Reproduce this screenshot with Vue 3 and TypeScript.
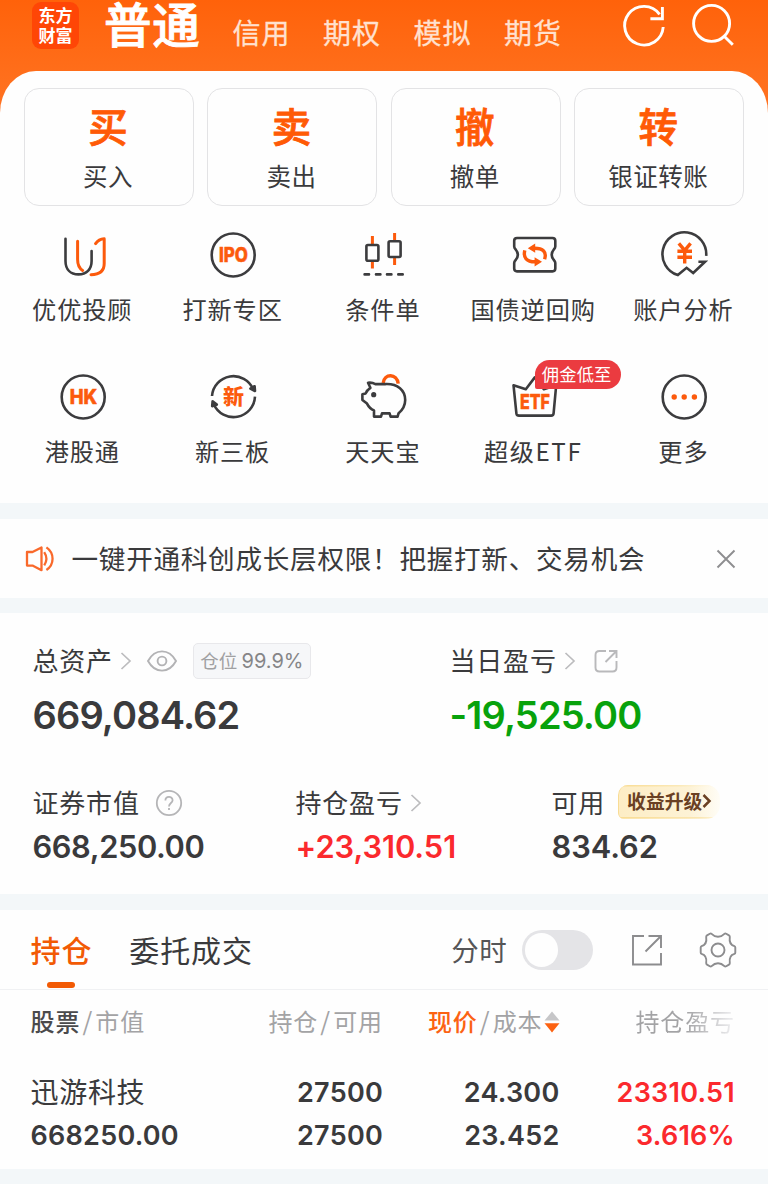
<script setup lang="ts">
interface Action { glyph: string; label: string }
interface Tool { icon: string; label: string; badge?: string }

const markets: string[] = ['信用', '期权', '模拟', '期货']

const actions: Action[] = [
  { glyph: '买', label: '买入' },
  { glyph: '卖', label: '卖出' },
  { glyph: '撤', label: '撤单' },
  { glyph: '转', label: '银证转账' },
]

const tools: Tool[] = [
  { icon: 'advisor', label: '优优投顾' },
  { icon: 'ipo', label: '打新专区' },
  { icon: 'candles', label: '条件单' },
  { icon: 'bond', label: '国债逆回购' },
  { icon: 'analysis', label: '账户分析' },
  { icon: 'hk', label: '港股通' },
  { icon: 'neeq', label: '新三板' },
  { icon: 'piggy', label: '天天宝' },
  { icon: 'etf', label: '超级ETF', badge: '佣金低至' },
  { icon: 'more', label: '更多' },
]
</script>

<template>
  <div class="page">
    <header class="top">
      <div class="logo"><span>东方</span><span>财富</span></div>
      <h1 class="current">普通</h1>
      <nav class="markets">
        <span v-for="m in markets" :key="m">{{ m }}</span>
      </nav>
      <svg class="top-icon" width="48" height="50" viewBox="620 0 48 50" fill="none" stroke="#fff" stroke-width="2.9">
        <path d="M663.2 27A19.3 19.3 0 1 1 659.6 14.4" />
        <path d="M662.4 7V18.8H650.4" />
      </svg>
      <svg class="top-icon search" width="48" height="50" viewBox="690 0 48 50" fill="none" stroke="#fff" stroke-width="2.9">
        <circle cx="711.6" cy="23.4" r="18" />
        <path d="M724.2 36.2L732.8 44.8" />
      </svg>
    </header>

    <main class="panel">
      <div class="actions">
        <button v-for="a in actions" :key="a.label" class="action">
          <b>{{ a.glyph }}</b>
          <span>{{ a.label }}</span>
        </button>
      </div>

      <div class="tools">
        <div v-for="t in tools" :key="t.icon" class="tool">
          <div class="tool-icon">
            <svg width="50" height="50" viewBox="0 0 50 50" fill="none" stroke="#3c3c3e" stroke-width="2.6" stroke-linecap="round" stroke-linejoin="round">
              <template v-if="t.icon === 'advisor'">
                <path d="M7.5 8.7V31C7.5 39.5 12.6 44.4 20.5 44.4S33.6 39.5 33.6 31V21" />
                <path class="hot" stroke-width="3" d="M19.6 11.3V29.5C19.6 35 21.4 38.4 24.6 40.4M37.6 13.6C39.8 10.4 42.6 9 46.2 8.8V33.5C46.2 40.6 41.4 44.6 33 44.8" />
              </template>
              <template v-else-if="t.icon === 'ipo'">
                <circle cx="25.2" cy="25" r="21.5" />
                <text x="25.4" y="32" font-size="19.5" textLength="29" lengthAdjust="spacingAndGlyphs">IPO</text>
              </template>
              <template v-else-if="t.icon === 'candles'">
                <path class="hot thick" stroke-linecap="butt" d="M14.4 6V14M14.4 32V38.6M36.6 3V10M36.6 28V35" />
                <rect x="8.4" y="15" width="12" height="15.8" rx="1.5" />
                <rect x="30.6" y="11.2" width="12" height="15.8" rx="1.5" />
                <path d="M6.6 44.4H11M18 44.4H22.4M29 44.4H33.4M40.3 44.4H44.7" />
              </template>
              <template v-else-if="t.icon === 'bond'">
                <path d="M8 8H43.5Q46.3 8 46.3 10.8V16.5Q46.3 18 44.8 19.5Q40.6 24.7 44.8 30Q46.3 31.5 46.3 33V38.6Q46.3 41.4 43.5 41.4H8Q5.2 41.4 5.2 38.6V33Q5.2 31.5 6.7 30Q11 24.7 6.7 19.5Q5.2 18 5.2 16.5V10.8Q5.2 8 8 8Z" />
                <path class="hot heavy" stroke-linecap="butt" d="M15.8 20.4C14 27.5 17.6 31.8 26 31.8M25.4 18.3C34 18.3 38 21.9 35.6 29.2" />
                <path class="fill" d="M33 31.8L25.6 27.2V36.4ZM18.8 18.2L26.2 13.6V22.8Z" />
              </template>
              <template v-else-if="t.icon === 'analysis'">
                <path stroke-linecap="butt" stroke-linejoin="miter" d="M47.2 25.8A21.9 21.9 0 1 0 18.8 45.1L27.6 37.8L34.2 43L46 31.8H39.4" />
                <path class="hot heavy" stroke-linecap="butt" d="M19.8 13.3L25.7 20.4L31.6 13.3M25.7 20V33.6M18.4 21.2H33M18.4 27.2H33" />
              </template>
              <template v-else-if="t.icon === 'hk'">
                <circle cx="25.2" cy="25" r="21.5" />
                <text x="25.4" y="32" font-size="19.5" textLength="27.5" lengthAdjust="spacingAndGlyphs">HK</text>
              </template>
              <template v-else-if="t.icon === 'neeq'">
                <path stroke-linecap="butt" d="M4 24A21.5 21.5 0 0 1 45.2 17.2M47 24.6A21.5 21.5 0 0 1 5.8 32.2" />
                <path class="ink" d="M47 19L46.6 14.2L42.4 16.6ZM4.6 29.4L4.2 34.2L8.8 32.6Z" />
                <text class="cjk" x="25.4" y="32.4" font-size="21">新</text>
              </template>
              <template v-else-if="t.icon === 'piggy'">
                <path class="hot heavy" stroke-linecap="butt" d="M25.2 11C26.2 1.2 39 1.2 40.2 11.6" />
                <path d="M10 10.8Q14 10.2 17.4 12.1H27C40 11.4 47.2 18.5 47.2 28C47.2 34 44.7 37.8 40.6 41.2L39.6 44.6H32.6L31.6 41.4H24L23 44.6H16V38.4Q11.5 36.6 9 31.6L4.4 28V22.2L7.7 21.4Q9 18 12.4 15.8Z" />
                <circle class="ink" cx="15.7" cy="22.7" r="1.3" />
              </template>
              <template v-else-if="t.icon === 'etf'">
                <path d="M4.5 13.2L16.8 17.2L25.8 5.4L34.8 17.2L47.2 13.2L44.6 41.4Q44.4 43.6 42.2 43.6H10Q7.8 43.6 7.4 41.4Z" />
                <text x="26" y="36.6" font-size="20.5" textLength="30" lengthAdjust="spacingAndGlyphs">ETF</text>
              </template>
              <template v-else>
                <circle cx="25.2" cy="25" r="21.5" />
                <g class="dots"><circle cx="15.2" cy="25" r="2.7" /><circle cx="25.2" cy="25" r="2.7" /><circle cx="35.4" cy="25" r="2.7" /></g>
              </template>
            </svg>
            <em v-if="t.badge" class="badge">{{ t.badge }}</em>
          </div>
          <span class="tool-label" :class="{ latin: t.icon === 'etf' }">{{ t.label }}</span>
        </div>
      </div>
    </main>

    <section class="notice">
      <svg width="32" height="32" viewBox="24 543 32 32" fill="none" stroke="#f9692b" stroke-width="2.3" stroke-linejoin="round">
        <path d="M27 552H32.5L41.5 547.4V570.2L32.5 565.6H27Z" />
        <path d="M44.2 552.2Q48.6 558.8 44.2 565.4M46.4 547.4C54.6 553 54.6 564.6 46.4 570" />
      </svg>
      <p>一键开通科创成长层权限！把握打新、交易机会</p>
      <svg class="close" width="20" height="20" viewBox="0 0 20 20" fill="none" stroke="#8e8e90" stroke-width="1.9"><path d="M1.5 1.5L18.5 18.5M18.5 1.5L1.5 18.5" /></svg>
    </section>

    <section class="assets">
      <div class="row main-row">
        <div class="cell">
          <div class="label">
            <span>总资产</span>
            <svg class="chev" width="12" height="20" viewBox="0 0 12 20"><path d="M1.5 2L10 10L1.5 18" /></svg>
            <svg class="eye" width="32" height="26" viewBox="0 0 32 26" fill="none" stroke="#b3b3b5" stroke-width="1.9"><path d="M2 13C9 .2 23 .2 30 13C23 25.8 9 25.8 2 13Z" /><circle cx="16" cy="13" r="4.4" /></svg>
            <span class="ratio">仓位 <i>99.9%</i></span>
          </div>
          <strong>669,084.62</strong>
        </div>
        <div class="cell">
          <div class="label">
            <span>当日盈亏</span>
            <svg class="chev" width="12" height="20" viewBox="0 0 12 20"><path d="M1.5 2L10 10L1.5 18" /></svg>
            <svg class="share" width="24" height="24" viewBox="0 0 24 24" fill="none" stroke="#b9b9bb" stroke-width="1.9"><path d="M12 2H5.5Q1.5 2 1.5 6V18.5Q1.5 22.5 5.5 22.5H18.5Q22.5 22.5 22.5 18.5V12M15 2H22.5V9M22 2.5L11.5 13" /></svg>
          </div>
          <strong class="green">-19,525.00</strong>
        </div>
      </div>
      <div class="row sub-row">
        <div class="cell">
          <div class="label">
            <span>证券市值</span>
            <svg class="help" width="28" height="28" viewBox="0 0 28 28" fill="none" stroke="#b5b5b7" stroke-width="1.8"><circle cx="14" cy="14" r="12.2" /><path d="M10.4 11.5C10.4 6.6 17.6 6.8 17.6 11.2C17.6 14 14 14 14 17.4M14 19V21" /></svg>
          </div>
          <strong class="tight">668,250.00</strong>
        </div>
        <div class="cell">
          <div class="label">
            <span>持仓盈亏</span>
            <svg class="chev" width="12" height="20" viewBox="0 0 12 20"><path d="M1.5 2L10 10L1.5 18" /></svg>
          </div>
          <strong class="red">+23,310.51</strong>
        </div>
        <div class="cell">
          <div class="label">
            <span>可用</span>
            <span class="gold">收益升级<svg width="10" height="16" viewBox="0 0 10 16" fill="none" stroke="#6a4023" stroke-width="2.5"><path d="M1.5 2L7.5 8L1.5 14" /></svg></span>
          </div>
          <strong>834.62</strong>
        </div>
      </div>
    </section>

    <section class="holdings">
      <div class="tabs">
        <span class="tab active">持仓</span>
        <span class="tab">委托成交</span>
        <span class="minute">分时</span>
        <span class="toggle"><i></i></span>
        <svg class="open" width="34" height="34" viewBox="0 0 34 34" fill="none" stroke="#8c8c8e" stroke-width="1.9"><path d="M14 3H3V31.5H31V20M18.5 3H31V15M31 3L15.5 18.5" /></svg>
        <svg class="gear" width="38" height="38" viewBox="0 0 38 38" fill="none" stroke="#8c8c8e" stroke-width="1.9" stroke-linejoin="round">
          <path d="M12.6 2.9Q15.4 5.8 19 5.8T25.4 2.9Q26.2 2.2 27.2 2.8L30 4.4Q31 5 30.8 6.2C30 11.6 32 14.2 35.4 15.2Q36.3 15.6 36.3 16.6V21.4Q36.3 22.4 35.4 22.8C32 23.8 30 26.4 30.8 31.8Q31 33 30 33.6L27.2 35.2Q26.2 35.8 25.4 35.1Q22.6 32.2 19 32.2T12.6 35.1Q11.8 35.8 10.8 35.2L8 33.6Q7 33 7.2 31.8C8 26.4 6 23.8 2.6 22.8Q1.7 22.4 1.7 21.4V16.6Q1.7 15.6 2.6 15.2C6 14.2 8 11.6 7.2 6.2Q7 5 8 4.4L10.8 2.8Q11.8 2.2 12.6 2.9Z" />
          <circle cx="19" cy="19" r="6.5" />
        </svg>
      </div>
      <div class="thead">
        <span><b>股票</b><s>/</s>市值</span>
        <span>持仓<s>/</s>可用</span>
        <span class="sorted"><b>现价</b><s>/</s>成本<svg width="16" height="22" viewBox="0 0 16 22"><path fill="#c6c6c8" d="M8 .5L15.5 9.5H.5Z" /><path fill="#fc6212" d="M.5 12.2H15.5L8 21.5Z" /></svg></span>
        <span class="fade">持仓盈亏</span>
      </div>
      <div class="holding">
        <div><span class="name">迅游科技</span><span>668250.00</span></div>
        <div><span>27500</span><span>27500</span></div>
        <div><span>24.300</span><span>23.452</span></div>
        <div class="red"><span>23310.51</span><span>3.616%</span></div>
      </div>
    </section>
  </div>
</template>

<style>
body { margin: 0; background: #f3f7f9; }
</style>

<style scoped>
* { box-sizing: border-box; }
.page {
  width: 768px; height: 1184px; overflow: hidden;
  background: linear-gradient(#ff620a 0, #ff6f1c 80px, #ff7222 115px, #f3f7f9 115px);
  font-family: "Noto Sans CJK SC", sans-serif; color: #3a3a3c;
}
svg { display: block; flex: none; }
.top { display: flex; align-items: flex-start; height: 71px; padding-left: 32px; color: #fff; }
.logo {
  width: 47px; height: 47px; margin-top: 2px; padding-top: 3px; border-radius: 9px; background: #ff4606;
  font: 700 17px/19.5px "Noto Sans CJK SC", sans-serif; text-align: center;
}
.logo span { display: block; }
.current { margin: -1px 0 0 25px; width: 98px; font-size: 47.5px; line-height: 48px; font-weight: 500; letter-spacing: .8px; -webkit-text-stroke: .9px #fff; }
.markets { display: flex; gap: 32.5px; margin: 12px 0 0 30.5px; font-size: 28px; line-height: 40px; letter-spacing: 1px; color: #ffe1d0; -webkit-text-stroke: .3px #ffe1d0; }
.markets span { width: 58px; white-space: nowrap; }
.top-icon { margin-left: 58px; }
.top-icon.search { margin-left: 22px; }

.panel { height: 432px; padding: 17px 24px 0; background: #fefefe; border-radius: 36px 36px 0 0 / 42px 42px 0 0; }
.actions { display: grid; grid-template-columns: repeat(4, 170px); column-gap: 13.4px; }
.action {
  height: 118px; padding: 12px 2px 0 0; border: 1.5px solid #e3e3e5; border-radius: 15px; background: #fefefe;
  font-family: inherit; color: #3a3a3c; display: flex; flex-direction: column; align-items: center;
}
.action b { font-size: 39.5px; line-height: 48px; font-weight: 500; -webkit-text-stroke: .8px #ff5a06; color: #ff5a06; }
.action span { margin-top: 9px; font-size: 24.5px; line-height: 36px; letter-spacing: .5px; }
.tools { display: grid; grid-template-columns: repeat(5, 150.3px); grid-auto-rows: 142px; margin: 24px 0 0 -16.4px; }
.tool { display: flex; flex-direction: column; align-items: center; }
.tool-icon { position: relative; height: 50px; }
.tool-label { margin: 10.5px 1px 0 0; font-size: 24.2px; line-height: 36px; letter-spacing: .9px; white-space: nowrap; }
.tool-label.latin { letter-spacing: 1.6px; }
.tool .hot { stroke: #fc5a0c; }
.tool .thick { stroke-width: 3; }
.tool .heavy { stroke-width: 3.4; }
.tool .fill, .dots { fill: #fc5a0c; stroke: none; }
.tool .ink { fill: #3c3c3e; }
.tool text { fill: #fc5a0c; stroke: #fc5a0c; stroke-width: .5; font-family: Inter, sans-serif; font-weight: 800; text-anchor: middle; }
.tool text.cjk { font-family: "Noto Sans CJK SC", sans-serif; stroke: none; }
.badge {
  position: absolute; left: 26px; top: -12px; width: 86px; height: 29px; border-radius: 15px 15px 15px 2px; background: #eb3b40;
  color: #fff; font-style: normal; font-size: 17.3px; line-height: 28px; text-align: center; white-space: nowrap; letter-spacing: .2px; padding-right: 2px;
}

.notice { display: flex; align-items: center; height: 79px; margin-top: 16px; padding-left: 24px; background: #fefefe; }
.notice p { margin: 0 0 2px 15.5px; width: 600px; font-size: 26.6px; line-height: 40px; letter-spacing: .73px; white-space: nowrap; }
.close { margin-left: 44.5px; }

.assets { height: 281px; margin-top: 15px; padding: 26px 0 0 32.5px; background: #fefefe; }
.row { display: flex; }
.label { display: flex; align-items: center; height: 44px; font-size: 26px; letter-spacing: .8px; }
.label > span:first-child { margin-top: -4px; white-space: nowrap; }
.chev { fill: none; stroke: #bcbcbe; stroke-width: 1.7; margin-left: 7px; }
.eye { margin-left: 14px; }
.ratio {
  margin-left: 15px; width: 118px; height: 36px; border: 1.5px solid #e8e8eb; border-radius: 5px; background: #f6f7f9;
  font-size: 18.5px; line-height: 32px; letter-spacing: 0; text-align: center; color: #a0a0a2; white-space: nowrap;
}
.ratio i { font: 400 20px/32px Inter, sans-serif; color: #858587; }
.share { margin-left: 18px; }
strong { display: block; font-family: Inter, sans-serif; font-weight: 600; white-space: nowrap; }
.main-row strong { margin-top: 9px; font-size: 38px; line-height: 46px; letter-spacing: -.85px; }
.main-row .cell:first-child { width: 417px; }
.sub-row { margin-top: 43px; }
.sub-row strong { margin-top: 2px; font-size: 30.8px; line-height: 40px; letter-spacing: -.05px; }
.sub-row strong.tight { letter-spacing: -.4px; }
.sub-row .cell:nth-child(1) { width: 263px; }
.sub-row .cell:nth-child(2) { width: 256px; }
.help { margin-left: 15px; }
.green { color: #08a20c; }
.red { color: #fb292d; }
.gold {
  display: flex; align-items: center; width: 102px; height: 34px; margin: -3px 0 0 13px; padding: 0 0 2px 8px;
  border-left: 1.5px solid #f9dc94; border-radius: 10px 14px 14px 6px;
  background:
    linear-gradient(90deg, #f9dc94, #fbe9b8 60%, #fffdf6) top / 100% 1.5px no-repeat,
    linear-gradient(90deg, #f9dc94, #fae6b2 80%, #fff6dc) bottom / 100% 1.5px no-repeat,
    linear-gradient(90deg, #fdedc5, #fdf2d5 70%, #fffdf6);
  font-size: 18.8px; font-weight: 700; letter-spacing: 0; color: #6a4023; white-space: nowrap;
}
.gold svg { margin-top: 1px; }

.holdings { height: 259px; margin-top: 16px; background: #fefefe; }
.tabs { display: flex; align-items: center; height: 80px; padding: 0 0 0 30.5px; border-bottom: 1.5px solid #f0f1f3; }
.tab { margin-top: -2px; font-size: 30px; line-height: 44px; letter-spacing: .9px; }
.tab.active { position: relative; margin-right: 37px; font-weight: 500; color: #f25a04; }
.tab.active::after { content: ""; position: absolute; left: 16.5px; top: 55px; width: 28px; height: 6px; border-radius: 3px; background: #f25a04; }
.tab.active + .tab { width: 322px; }
.minute { margin-top: -1px; font-size: 27.5px; letter-spacing: .5px; color: #555557; width: 71px; }
.toggle { width: 71px; height: 40px; padding: 3px; border-radius: 20px; background: #e4e4e7; }
.toggle i { display: block; width: 33px; height: 34px; border-radius: 17px; background: #fefefe; }
.open { margin-left: 36.5px; }
.gear { margin-left: 35px; }
.thead, .holding { display: grid; grid-template-columns: 200px 152.5px 176.5px 175.5px; margin-left: 30.5px; }
.thead { height: 64px; font-size: 24px; line-height: 61px; letter-spacing: .9px; color: #a3a3a5; white-space: nowrap; }
.thead span { display: flex; }
.thead span + span { justify-content: flex-end; }
.thead b { font-weight: 500; color: #4a4a4c; }
.thead s { width: 15px; text-align: center; text-decoration: none; font-size: 25px; line-height: 60px; }
.thead .sorted b { color: #fc6212; }
.sorted svg { margin: 21px 0 0 1px; }
.thead .fade { background: linear-gradient(90deg, #a3a3a5 72%, #e8e8ea 97%); background-clip: text; -webkit-background-clip: text; color: transparent; }
.holding { font: 600 27px/43px Inter, sans-serif; letter-spacing: .25px; margin-top: 17px; }
.holding div + div { text-align: right; }
.holding span { display: block; height: 43px; }
.holding .name { font: 400 28px/40px "Noto Sans CJK SC", sans-serif; letter-spacing: .7px; }
</style>
